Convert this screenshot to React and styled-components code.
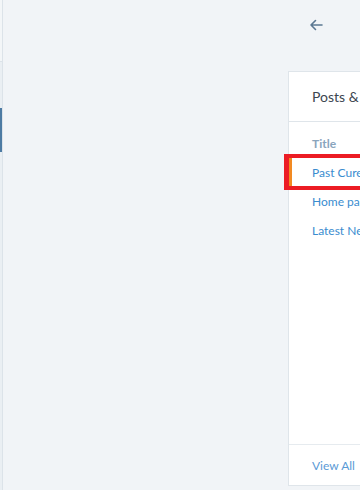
import React from 'react';
import styled, { createGlobalStyle } from 'styled-components';

const GlobalStyle = createGlobalStyle`
  html, body {
    margin: 0;
    padding: 0;
    background: #f1f4f7;
    font-family: Lato, "Open Sans", sans-serif;
  }
`;

const Page = styled.div`
  display: flex;
  width: 360px;
  height: 490px;
  overflow: hidden;
  background: #f1f4f7;
`;

const Sidebar = styled.nav`
  flex: 0 0 2px;
  display: flex;
  flex-direction: column;
  background: #eaeff3;
  border-right: 1px solid #dce3e9;
`;

const SideHead = styled.div`
  height: 61px;
  background: #f3f6f8;
  border-bottom: 1px solid #dce3e9;
`;

const SideItem = styled.div`
  height: 44px;
  margin-top: ${ p => p.gap || 0 }px;
  background: ${ p => p.active ? '#4d7ba3' : 'transparent' };
`;

const Main = styled.main`
  flex: 1;
  display: flex;
  justify-content: flex-start;
  padding-left: 285px;
`;

const Column = styled.div`
  flex: 0 0 420px;
  display: flex;
  flex-direction: column;
`;

const Toolbar = styled.div`
  height: 50px;
  display: flex;
  align-items: center;
  padding-left: 21px;
`;

const BackButton = styled.button`
  display: flex;
  align-items: center;
  padding: 0;
  border: none;
  background: none;
  color: #5b7892;
  cursor: pointer;
`;

const Card = styled.section`
  margin-top: 21px;
  height: 415px;
  display: flex;
  flex-direction: column;
  background: #fff;
  border: 1px solid #dfe5ea;
  box-sizing: border-box;
`;

const CardHeader = styled.header`
  height: 48px;
  display: flex;
  align-items: center;
  padding: 0 23px 1px;
  border-bottom: 1px solid #dfe5ea;
  font-size: 14px;
  color: #3c4650;
`;

const CardBody = styled.div`
  flex: 1;
  display: flex;
  flex-direction: column;
`;

const HeadCell = styled.div`
  padding: 14px 23px 6px;
  line-height: 16px;
  font-size: 12px;
  font-weight: 700;
  color: #8aa5bd;
`;

const Row = styled.a`
  position: relative;
  display: flex;
  align-items: center;
  height: 29px;
  padding-left: 20px;
  font-size: 12px;
  color: #3a8ccf;
  text-decoration: none;
  white-space: nowrap;
  border-left: 3px solid ${ p => p.selected ? '#f28a22' : 'transparent' };
`;

const Marker = styled.span`
  position: absolute;
  top: -4px;
  bottom: -3px;
  left: -8px;
  right: -10px;
  border: 4px solid #ec1c24;
  border-left-width: 5px;
  pointer-events: none;
`;

const CardFooter = styled.footer`
  height: 41px;
  display: flex;
  align-items: center;
  padding: 1px 23px 0;
  box-sizing: border-box;
  border-top: 1px solid #e6ebef;
  font-size: 12px;
  color: #5a9ad6;
`;

const posts = [
  { id: 1, title: 'Past Cure Review' },
  { id: 2, title: 'Home page' },
  { id: 3, title: 'Latest News' },
];

const App = () => {
  return (
    <>
      <GlobalStyle />
      <Page>
        <Sidebar>
          <SideHead />
          <SideItem gap={ 46 } active />
        </Sidebar>
        <Main>
          <Column>
            <Toolbar>
              <BackButton aria-label='Back'>
                <svg width='14' height='12' viewBox='0 0 14 12' fill='none'
                  stroke='currentColor' strokeWidth='1.6' strokeLinecap='round' strokeLinejoin='round'>
                  <path d='M13 6H2M6.5 1.5L2 6l4.5 4.5' />
                </svg>
              </BackButton>
            </Toolbar>
            <Card>
              <CardHeader>Posts &amp; Pages</CardHeader>
              <CardBody>
                <HeadCell>Title</HeadCell>
                { posts.map( ( post, i ) => (
                  <Row key={ post.id } href='#' selected={ i === 0 }>
                    { post.title }
                    { i === 0 && <Marker /> }
                  </Row>
                ) ) }
              </CardBody>
              <CardFooter>View All</CardFooter>
            </Card>
          </Column>
        </Main>
      </Page>
    </>
  );
};

export default App;
